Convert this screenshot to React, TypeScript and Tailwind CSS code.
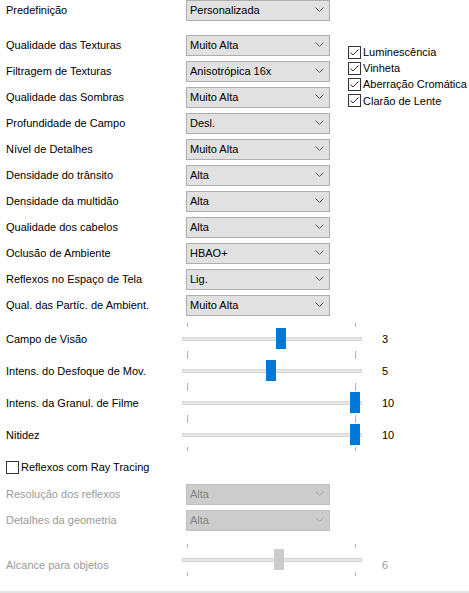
import React from 'react'

const QUALITY_ROWS = [
  { label: 'Qualidade das Texturas', value: 'Muito Alta' },
  { label: 'Filtragem de Texturas', value: 'Anisotrópica 16x' },
  { label: 'Qualidade das Sombras', value: 'Muito Alta' },
  { label: 'Profundidade de Campo', value: 'Desl.' },
  { label: 'Nível de Detalhes', value: 'Muito Alta' },
  { label: 'Densidade do trânsito', value: 'Alta' },
  { label: 'Densidade da multidão', value: 'Alta' },
  { label: 'Qualidade dos cabelos', value: 'Alta' },
  { label: 'Oclusão de Ambiente', value: 'HBAO+' },
  { label: 'Reflexos no Espaço de Tela', value: 'Lig.' },
  { label: 'Qual. das Partíc. de Ambient.', value: 'Muito Alta' },
]

const SLIDERS = [
  { label: 'Campo de Visão', value: '3', thumb: 94 },
  { label: 'Intens. do Desfoque de Mov.', value: '5', thumb: 84 },
  { label: 'Intens. da Granul. de Filme', value: '10', thumb: 168 },
  { label: 'Nitidez', value: '10', thumb: 168 },
]

const EFFECTS = ['Luminescência', 'Vinheta', 'Aberração Cromática', 'Clarão de Lente']

const Chevron = ({ disabled }: { disabled?: boolean }) => (
  <svg width="9" height="6" viewBox="0 0 9 6" className="shrink-0">
    <path d="M0.5 0.5 L4.5 4.5 L8.5 0.5" fill="none" stroke={disabled ? '#a8a8a8' : '#606060'} strokeWidth="1" />
  </svg>
)

const Select = ({ value, disabled }: { value: string; disabled?: boolean }) => (
  <div
    className={`w-[144px] h-[21px] flex items-center justify-between pl-[3px] pr-[5px] border ${
      disabled ? 'bg-[#cccccc] border-[#bfbfbf] text-[#838383]' : 'bg-[#e1e1e1] border-[#adadad] text-black'
    }`}
  >
    <span>{value}</span>
    <Chevron disabled={disabled} />
  </div>
)

const Slider = ({ thumb, disabled }: { thumb: number; disabled?: boolean }) => (
  <div className="relative w-[180px] h-[32px] shrink-0">
    <div className="absolute left-[5px] top-0 w-px h-[4px] bg-[#b4b4b4]" />
    <div className="absolute left-[173px] top-0 w-px h-[4px] bg-[#b4b4b4]" />
    <div className="absolute left-0 top-[14px] w-[180px] h-[4px] bg-[#e7e7e7] border border-[#d6d6d6]" />
    <div
      className={`absolute top-[5px] w-[10px] h-[21px] ${disabled ? 'bg-[#cccccc]' : 'bg-[#0078d7]'}`}
      style={{ left: thumb }}
    />
    <div className="absolute left-[5px] top-[28px] w-px h-[4px] bg-[#b4b4b4]" />
    <div className="absolute left-[173px] top-[28px] w-px h-[4px] bg-[#b4b4b4]" />
  </div>
)

const Check = ({ label, checked }: { label: string; checked?: boolean }) => (
  <div className="flex items-center h-[16px] whitespace-nowrap">
    <div className="w-[13px] h-[13px] shrink-0 border border-[#333333] bg-white flex items-center justify-center">
      {checked && (
        <svg width="11" height="11" viewBox="0 0 11 11">
          <path d="M1.5 5.5 L4 8 L9.5 2.5" fill="none" stroke="#333333" strokeWidth="1" />
        </svg>
      )}
    </div>
    <span className="ml-[2px]">{label}</span>
  </div>
)

const App = () => {
  return (
    <div className="relative w-[469px] h-[593px] bg-white text-[11px] text-black overflow-hidden font-['Liberation_Sans',Arial,sans-serif]">
      <div className="flex items-center h-[20px]">
        <span className="w-[186px] pl-[6px]">Predefinição</span>
        <Select value="Personalizada" />
      </div>

      <div className="flex mt-[12px]">
        <div className="flex flex-col shrink-0">
          {QUALITY_ROWS.map(({ label, value }) => (
            <div key={label} className="flex items-center h-[26px]">
              <span className="w-[186px] pl-[6px]">{label}</span>
              <Select value={value} />
            </div>
          ))}
        </div>
        <div className="flex flex-col ml-[18px] mt-[12px] gap-[0.3px]">
          {EFFECTS.map((e) => (
            <Check key={e} label={e} checked />
          ))}
        </div>
      </div>

      <div className="flex flex-col mt-[5px]">
        {SLIDERS.map(({ label, value, thumb }) => (
          <div key={label} className="flex items-center h-[32px]">
            <span className="w-[182px] pl-[6px]">{label}</span>
            <Slider thumb={thumb} />
            <span className="ml-[20px]">{value}</span>
          </div>
        ))}
      </div>

      <div className="mt-[8px] pl-[6px]">
        <Check label="Reflexos com Ray Tracing" />
      </div>

      <div className="flex flex-col mt-[6px] text-[#9a9a9a]">
        <div className="flex items-center h-[26px]">
          <span className="w-[186px] pl-[6px]">Resolução dos reflexos</span>
          <Select value="Alta" disabled />
        </div>
        <div className="flex items-center h-[26px]">
          <span className="w-[186px] pl-[6px]">Detalhes da geometria</span>
          <Select value="Alta" disabled />
        </div>
      </div>

      <div className="flex mt-[11px] text-[#9a9a9a]">
        <span className="w-[182px] pl-[6px] pt-[13px]">Alcance para objetos</span>
        <Slider thumb={92} disabled />
        <span className="ml-[20px] pt-[13px]">6</span>
      </div>

      <div className="absolute left-0 bottom-0 w-full h-[2px] bg-[#e3e3e3]" />
    </div>
  )
}

export default App
